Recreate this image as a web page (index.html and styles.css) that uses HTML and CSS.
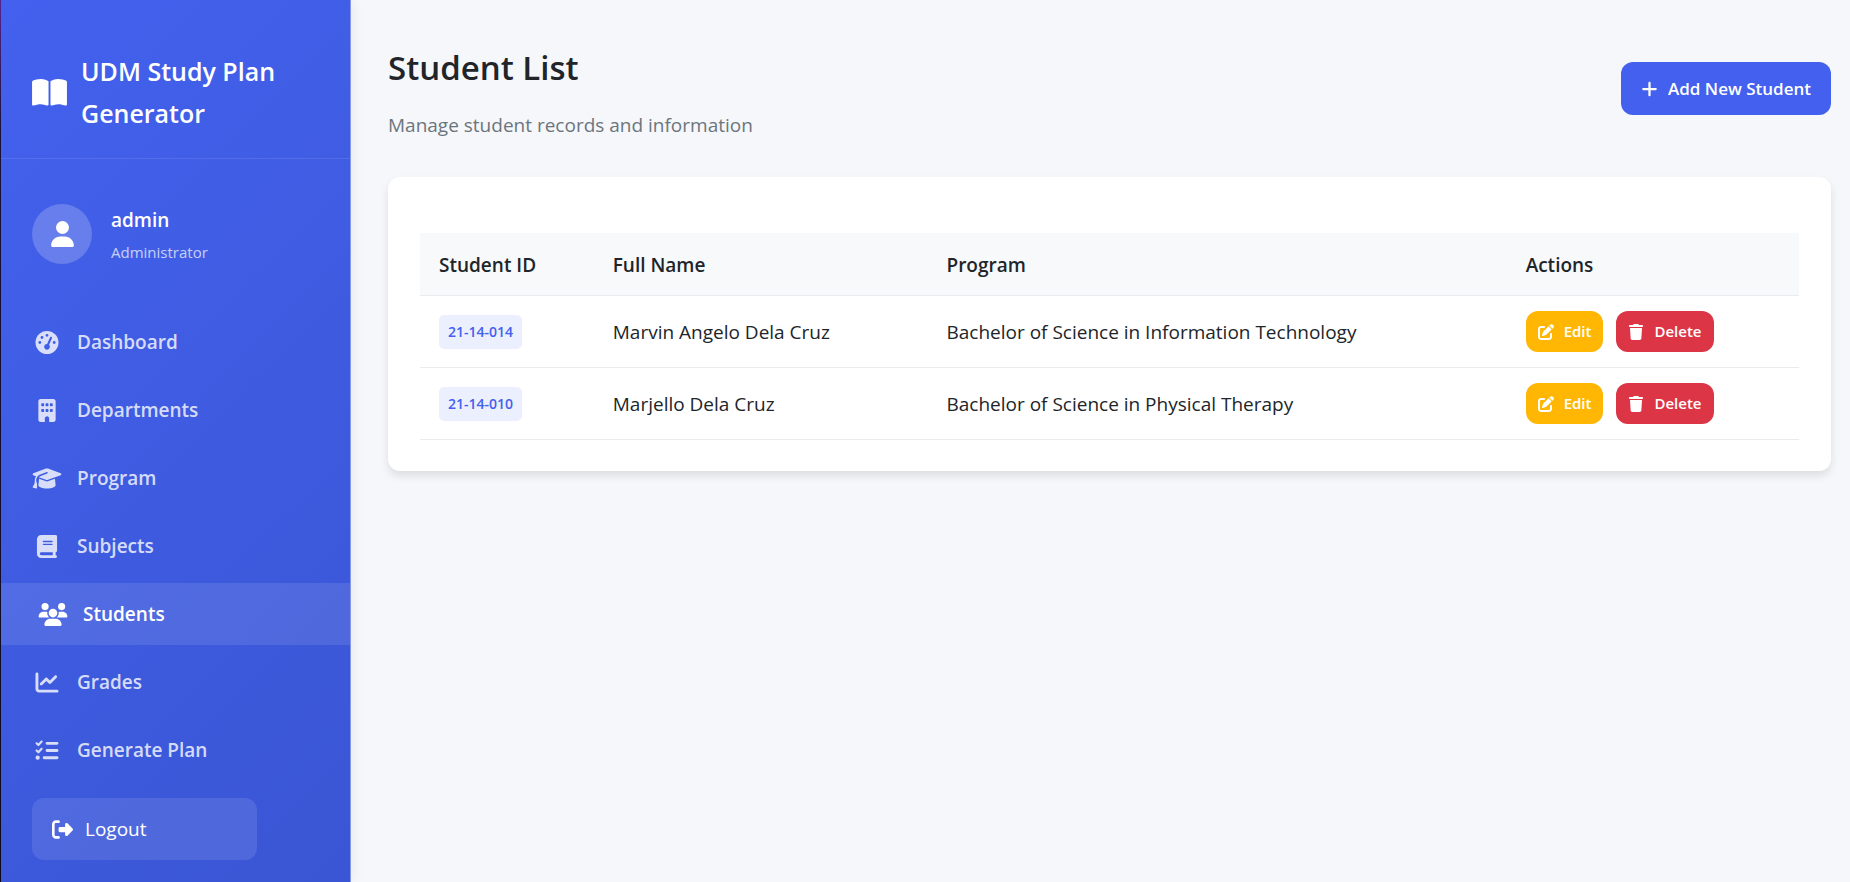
FILE: index.html
```html
<!DOCTYPE html>
<html lang="en">
<head>
<meta charset="utf-8">
<meta name="viewport" content="width=device-width, initial-scale=1">
<title>Student List - UDM Study Plan Generator</title>
<link rel="stylesheet" href="styles.css">
</head>
<body>
<svg class="sprite" aria-hidden="true">
  <symbol id="book-open" viewBox="0 0 576 512"><path d="M249.6 471.5c10.8 3.8 22.4-4.1 22.4-15.5V78.6c0-4.2-1.6-8.4-5-11C247.4 52 202.4 32 144 32C93.5 32 46.3 45.3 18.1 56.1C6.8 60.5 0 71.7 0 83.8V454.1c0 11.9 12.8 20.2 24.1 16.5C55.6 460.1 105.5 448 144 448c33.9 0 79 14 105.6 23.5zm76.8 0C353 462 398.1 448 432 448c38.5 0 88.4 12.1 119.9 22.6c11.3 3.8 24.1-4.6 24.1-16.5V83.8c0-12.1-6.8-23.3-18.1-27.6C529.7 45.3 482.5 32 432 32c-58.4 0-103.4 20-123 35.6c-3.3 2.6-5 6.8-5 11V456c0 11.4 11.7 19.3 22.4 15.5z"/></symbol>
  <symbol id="user" viewBox="0 0 448 512"><path d="M224 256A128 128 0 1 0 224 0a128 128 0 1 0 0 256zm-45.7 48C79.8 304 0 383.8 0 482.3C0 498.7 13.3 512 29.7 512H418.3c16.4 0 29.7-13.3 29.7-29.7C448 383.8 368.2 304 269.7 304H178.3z"/></symbol>
  <symbol id="gauge" viewBox="0 0 512 512"><path d="M0 256a256 256 0 1 1 512 0A256 256 0 1 1 0 256zM288 96a32 32 0 1 0 -64 0 32 32 0 1 0 64 0zM256 416c35.3 0 64-28.7 64-64c0-17.4-6.9-33.1-18.1-44.6L366 161.7c5.3-12.1-.2-26.3-12.3-31.6s-26.3 .2-31.6 12.3L257.9 288c-.6 0-1.3 0-1.9 0c-35.3 0-64 28.7-64 64s28.7 64 64 64zM176 144a32 32 0 1 0 -64 0 32 32 0 1 0 64 0zM96 288a32 32 0 1 0 0-64 32 32 0 1 0 0 64zm352-32a32 32 0 1 0 -64 0 32 32 0 1 0 64 0z"/></symbol>
  <symbol id="building" viewBox="0 0 384 512"><path fill-rule="evenodd" d="M48 0C21.5 0 0 21.5 0 48V464c0 26.5 21.5 48 48 48h96V432c0-26.5 21.5-48 48-48s48 21.5 48 48v80h96c26.5 0 48-21.5 48-48V48c0-26.5-21.5-48-48-48H48zM80 224h32a16 16 0 0 1 16 16v32a16 16 0 0 1-16 16H80a16 16 0 0 1-16-16v-32a16 16 0 0 1 16-16zM176 224h32a16 16 0 0 1 16 16v32a16 16 0 0 1-16 16h-32a16 16 0 0 1-16-16v-32a16 16 0 0 1 16-16zM272 224h32a16 16 0 0 1 16 16v32a16 16 0 0 1-16 16h-32a16 16 0 0 1-16-16v-32a16 16 0 0 1 16-16zM80 96h32a16 16 0 0 1 16 16v32a16 16 0 0 1-16 16H80a16 16 0 0 1-16-16v-32a16 16 0 0 1 16-16zM176 96h32a16 16 0 0 1 16 16v32a16 16 0 0 1-16 16h-32a16 16 0 0 1-16-16v-32a16 16 0 0 1 16-16zM272 96h32a16 16 0 0 1 16 16v32a16 16 0 0 1-16 16h-32a16 16 0 0 1-16-16v-32a16 16 0 0 1 16-16z"/></symbol>
  <symbol id="graduation" viewBox="0 0 640 512"><path d="M320 32c-8.1 0-16.1 1.4-23.7 4.1L15.8 137.4C6.3 140.9 0 149.9 0 160s6.3 19.1 15.8 22.6l57.9 20.9C57.3 229.3 48 259.8 48 291.9v28.1c0 28.4-10.8 57.7-22.3 80.8c-6.5 13-13.9 25.8-22.5 37.6C0 442.7-.9 448.3 .9 453.4s6 8.9 11.2 10.2l64 16c4.2 1.1 8.7 .3 12.4-2s6.3-6.1 7.1-10.4c8.6-42.8 4.3-81.2-2.1-108.7C90.3 344.3 86 329.8 80 316.5V291.9c0-30.2 10.2-58.7 27.9-81.5c12.9-15.5 29.6-28 49.2-35.7l157-61.7c8.2-3.2 17.5 .8 20.7 9s-.8 17.5-9 20.7l-157 61.7c-12.4 4.9-23.3 12.4-32.2 21.6l159.6 57.6c7.6 2.7 15.6 4.1 23.7 4.1s16.1-1.4 23.7-4.1L624.2 182.6c9.5-3.4 15.8-12.5 15.8-22.6s-6.3-19.1-15.8-22.6L343.7 36.1C336.1 33.4 328.1 32 320 32zM128 408c0 35.3 86 72 192 72s192-36.7 192-72L496.7 262.6 354.5 314c-11.1 4-22.8 6-34.5 6s-23.5-2-34.5-6L143.3 262.6 128 408z"/></symbol>
  <symbol id="book" viewBox="0 0 448 512"><path d="M96 0C43 0 0 43 0 96V416c0 53 43 96 96 96H384h32c17.7 0 32-14.3 32-32s-14.3-32-32-32V384c17.7 0 32-14.3 32-32V32c0-17.7-14.3-32-32-32H384 96zm0 384H352v64H96c-17.7 0-32-14.3-32-32s14.3-32 32-32zm32-240c0-8.8 7.2-16 16-16H336c8.8 0 16 7.2 16 16s-7.2 16-16 16H144c-8.8 0-16-7.2-16-16zm16 48H336c8.8 0 16 7.2 16 16s-7.2 16-16 16H144c-8.8 0-16-7.2-16-16s7.2-16 16-16z"/></symbol>
  <symbol id="users" viewBox="0 0 640 512"><path d="M144 0a80 80 0 1 1 0 160A80 80 0 1 1 144 0zM512 0a80 80 0 1 1 0 160A80 80 0 1 1 512 0zM0 298.7C0 239.8 47.8 192 106.7 192h42.7c15.9 0 31 3.5 44.6 9.7c-1.3 7.2-1.9 14.7-1.9 22.3c0 38.2 16.8 72.5 43.3 96c-.2 0-.4 0-.7 0H21.3C9.6 320 0 310.4 0 298.7zM405.3 320c-.2 0-.4 0-.7 0c26.6-23.5 43.3-57.8 43.3-96c0-7.6-.7-15-1.9-22.3c13.6-6.3 28.7-9.7 44.6-9.7h42.7C592.2 192 640 239.8 640 298.7c0 11.8-9.6 21.3-21.3 21.3H405.3zM224 224a96 96 0 1 1 192 0 96 96 0 1 1 -192 0zM128 485.3C128 411.7 187.7 352 261.3 352H378.7C452.3 352 512 411.7 512 485.3c0 14.7-11.9 26.7-26.7 26.7H154.7c-14.7 0-26.7-11.9-26.7-26.7z"/></symbol>
  <symbol id="chart" viewBox="0 0 512 512"><path d="M64 64c0-17.7-14.3-32-32-32S0 46.3 0 64V400c0 44.2 35.8 80 80 80H480c17.7 0 32-14.3 32-32s-14.3-32-32-32H80c-8.8 0-16-7.2-16-16V64zm406.6 86.6c12.5-12.5 12.5-32.8 0-45.3s-32.8-12.5-45.3 0L320 210.7l-57.4-57.4c-12.5-12.5-32.8-12.5-45.3 0l-112 112c-12.5 12.5-12.5 32.8 0 45.3s32.8 12.5 45.3 0L240 221.3l57.4 57.4c12.5 12.5 32.8 12.5 45.3 0l128-128z"/></symbol>
  <symbol id="tasks" viewBox="0 0 512 512"><path d="M152.1 38.2c9.9 8.9 10.7 24 1.8 33.9l-72 80c-4.4 4.9-10.6 7.8-17.2 7.9s-12.9-2.4-17.6-7L7 113C-2.3 103.6-2.3 88.4 7 79s24.6-9.4 33.9 0l22.1 22.1 55.1-61.2c8.9-9.9 24-10.7 33.9-1.8zm0 160c9.9 8.9 10.7 24 1.8 33.9l-72 80c-4.4 4.9-10.6 7.8-17.2 7.9s-12.9-2.4-17.6-7L7 273c-9.4-9.4-9.4-24.6 0-33.9s24.6-9.4 33.9 0l22.1 22.1 55.1-61.2c8.9-9.9 24-10.7 33.9-1.8zM224 96c0-17.7 14.3-32 32-32H480c17.7 0 32 14.3 32 32s-14.3 32-32 32H256c-17.7 0-32-14.3-32-32zm0 160c0-17.7 14.3-32 32-32H480c17.7 0 32 14.3 32 32s-14.3 32-32 32H256c-17.7 0-32-14.3-32-32zM160 416c0-17.7 14.3-32 32-32H480c17.7 0 32 14.3 32 32s-14.3 32-32 32H192c-17.7 0-32-14.3-32-32zM48 368a48 48 0 1 1 0 96 48 48 0 1 1 0-96z"/></symbol>
  <symbol id="logout" viewBox="0 0 512 512"><path d="M377.9 105.9L500.7 228.7c7.2 7.2 11.3 17.1 11.3 27.3s-4.1 20.1-11.3 27.3L377.9 406.1c-6.4 6.4-15 9.9-24 9.9c-18.7 0-33.9-15.2-33.9-33.9l0-62.1-128 0c-17.7 0-32-14.3-32-32l0-64c0-17.7 14.3-32 32-32l128 0 0-62.1c0-18.7 15.2-33.9 33.9-33.9c9 0 17.6 3.6 24 9.9zM160 96L96 96c-17.7 0-32 14.3-32 32l0 256c0 17.7 14.3 32 32 32l64 0c17.7 0 32 14.3 32 32s-14.3 32-32 32l-64 0c-53 0-96-43-96-96L0 128C0 75 43 32 96 32l64 0c17.7 0 32 14.3 32 32s-14.3 32-32 32z"/></symbol>
  <symbol id="plus" viewBox="0 0 448 512"><path d="M256 80c0-17.7-14.3-32-32-32s-32 14.3-32 32V224H48c-17.7 0-32 14.3-32 32s14.3 32 32 32H192V432c0 17.7 14.3 32 32 32s32-14.3 32-32V288H400c17.7 0 32-14.3 32-32s-14.3-32-32-32H256V80z"/></symbol>
  <symbol id="edit" viewBox="0 0 512 512"><path d="M471.6 21.7c-21.9-21.9-57.3-21.9-79.2 0L362.3 51.7l97.9 97.9 30.1-30.1c21.9-21.9 21.9-57.3 0-79.2L471.6 21.7zm-299.2 220c-6.1 6.1-10.8 13.6-13.5 21.9l-29.6 88.8c-2.9 8.6-.6 18.1 5.8 24.6s15.9 8.7 24.6 5.8l88.8-29.6c8.2-2.7 15.7-7.4 21.9-13.5L437.7 172.3 339.7 74.3 172.4 241.7zM96 64C43 64 0 107 0 160V416c0 53 43 96 96 96H352c53 0 96-43 96-96V320c0-17.7-14.3-32-32-32s-32 14.3-32 32v96c0 17.7-14.3 32-32 32H96c-17.7 0-32-14.3-32-32V160c0-17.7 14.3-32 32-32h96c17.7 0 32-14.3 32-32s-14.3-32-32-32H96z"/></symbol>
  <symbol id="trash" viewBox="0 0 448 512"><path d="M135.2 17.7L128 32H32C14.3 32 0 46.3 0 64S14.3 96 32 96H416c17.7 0 32-14.3 32-32s-14.3-32-32-32H320l-7.2-14.3C307.4 6.8 296.3 0 284.2 0H163.8c-12.1 0-23.2 6.8-28.6 17.7zM416 128H32L53.2 467c1.6 25.3 22.6 45 47.9 45H346.9c25.3 0 46.3-19.7 47.9-45L416 128z"/></symbol>
</svg>

<div class="layout">
  <aside class="sidebar">
    <div class="brand">
      <svg class="brand-icon" aria-hidden="true"><use href="#book-open"/></svg>
      <span class="brand-name">UDM Study Plan Generator</span>
    </div>
    <div class="profile">
      <span class="avatar"><svg class="avatar-icon" aria-hidden="true"><use href="#user"/></svg></span>
      <div class="profile-text">
        <span class="profile-name">admin</span>
        <span class="profile-role">Administrator</span>
      </div>
    </div>
    <nav class="nav" aria-label="Main">
      <a class="nav-link" href="#"><svg class="nav-icon" aria-hidden="true"><use href="#gauge"/></svg>Dashboard</a>
      <a class="nav-link" href="#"><svg class="nav-icon" aria-hidden="true"><use href="#building"/></svg>Departments</a>
      <a class="nav-link" href="#"><svg class="nav-icon" aria-hidden="true"><use href="#graduation"/></svg>Program</a>
      <a class="nav-link" href="#"><svg class="nav-icon" aria-hidden="true"><use href="#book"/></svg>Subjects</a>
      <a class="nav-link active" href="#" aria-current="page"><svg class="nav-icon" aria-hidden="true"><use href="#users"/></svg>Students</a>
      <a class="nav-link" href="#"><svg class="nav-icon" aria-hidden="true"><use href="#chart"/></svg>Grades</a>
      <a class="nav-link" href="#"><svg class="nav-icon" aria-hidden="true"><use href="#tasks"/></svg>Generate Plan</a>
    </nav>
    <a class="logout" href="#"><svg class="logout-icon" aria-hidden="true"><use href="#logout"/></svg>Logout</a>
  </aside>

  <main class="main">
    <header class="page-header">
      <div class="heading">
        <h1 class="title">Student List</h1>
        <p class="subtitle">Manage student records and information</p>
      </div>
      <button class="btn btn-add" type="button"><svg class="add-icon" aria-hidden="true"><use href="#plus"/></svg>Add New Student</button>
    </header>

    <section class="card">
      <table class="table">
        <colgroup><col class="col-id"><col class="col-name"><col class="col-program"><col class="col-actions"></colgroup>
        <thead>
          <tr><th scope="col">Student ID</th><th scope="col">Full Name</th><th scope="col">Program</th><th scope="col">Actions</th></tr>
        </thead>
        <tbody>
          <tr>
            <td><span class="badge">21-14-014</span></td>
            <td>Marvin Angelo Dela Cruz</td>
            <td>Bachelor of Science in Information Technology</td>
            <td><div class="actions">
              <button class="btn btn-small btn-edit" type="button"><svg class="btn-icon" aria-hidden="true"><use href="#edit"/></svg>Edit</button>
              <button class="btn btn-small btn-delete" type="button"><svg class="btn-icon" aria-hidden="true"><use href="#trash"/></svg>Delete</button>
            </div></td>
          </tr>
          <tr>
            <td><span class="badge">21-14-010</span></td>
            <td>Marjello Dela Cruz</td>
            <td>Bachelor of Science in Physical Therapy</td>
            <td><div class="actions">
              <button class="btn btn-small btn-edit" type="button"><svg class="btn-icon" aria-hidden="true"><use href="#edit"/></svg>Edit</button>
              <button class="btn btn-small btn-delete" type="button"><svg class="btn-icon" aria-hidden="true"><use href="#trash"/></svg>Delete</button>
            </div></td>
          </tr>
        </tbody>
      </table>
    </section>
  </main>
</div>
</body>
</html>
```
FILE: styles.css
```css
:root {
  --primary: #4361ee;
  --primary-dark: #3a56d4;
  --text: #212529;
  --muted: #6c757d;
  --line: #e9ecef;
}

*,
*::before,
*::after {
  box-sizing: border-box;
}

body {
  margin: 0;
  background: #f5f7fb;
  color: var(--text);
  font-family: "Open Sans", "Noto Sans", sans-serif;
  font-size: 19px;
  line-height: 32px;
}

svg {
  fill: currentColor;
  flex: none;
}

.sprite {
  display: none;
}

.layout {
  display: flex;
  min-height: 100vh;
}

/* Sidebar, with a thin dark strip down its left edge */
.sidebar {
  flex: none;
  width: 351px;
  padding-left: 1px;
  border-right: 1px solid #8797e8;
  background:
    linear-gradient(#55258f, #17123a 15%, #0c0a1e) left / 1px 100% no-repeat,
    linear-gradient(135deg, var(--primary), var(--primary-dark));
  box-shadow: 2px 0 12px rgba(0, 0, 0, 0.06);
  color: #fff;
}

.brand {
  display: flex;
  align-items: center;
  gap: 14px;
  padding: 50px 31px 24px;
  border-bottom: 1px solid rgba(255, 255, 255, 0.1);
  font-size: 25px;
  font-weight: 600;
  line-height: 42px;
}

.brand-icon {
  width: 35px;
  height: 31px;
}

.profile {
  display: flex;
  align-items: flex-start;
  gap: 19px;
  padding: 45px 31px 43px;
}

.avatar {
  display: grid;
  place-items: center;
  width: 60px;
  height: 60px;
  border-radius: 50%;
  background: rgba(255, 255, 255, 0.2);
}

.avatar-icon {
  width: 23px;
  height: 26px;
}

.profile-text {
  display: flex;
  flex-direction: column;
}

.profile-name {
  font-weight: 600;
}

.profile-role {
  font-size: 15px;
  opacity: 0.7;
}

.nav {
  display: flex;
  flex-direction: column;
  gap: 6px;
}

.nav-link {
  display: flex;
  align-items: center;
  gap: 15px;
  padding: 15px 31px;
  color: rgba(255, 255, 255, 0.8);
  font-weight: 600;
  text-decoration: none;
}

.nav-link.active {
  padding-left: 37px;
  background: rgba(255, 255, 255, 0.1);
  color: #fff;
}

.nav-icon {
  width: 30px;
  height: 23px;
}

.logout {
  display: flex;
  align-items: center;
  gap: 12px;
  width: 225px;
  margin: 17px 31px 21px;
  padding: 15px 20px;
  border-radius: 12px;
  background: rgba(255, 255, 255, 0.1);
  color: #fff;
  text-decoration: none;
}

.logout-icon {
  width: 21px;
  height: 21px;
}

/* Content */
.main {
  flex: 1;
  min-width: 0;
  padding: 36px 19px 36px 37px;
}

.page-header {
  display: flex;
  align-items: center;
  justify-content: space-between;
  margin-bottom: 36px;
}

.title {
  margin: 0 0 10px;
  font-size: 33px;
  font-weight: 600;
  line-height: 63px;
}

.subtitle {
  margin: 0;
  color: var(--muted);
}

.btn {
  display: inline-flex;
  align-items: center;
  border: 0;
  border-radius: 12px;
  color: #fff;
  font-family: inherit;
  font-weight: 600;
  cursor: pointer;
}

.btn-add {
  gap: 10px;
  padding: 12px 20px;
  background: var(--primary);
  font-size: 17px;
  line-height: 29px;
}

.add-icon {
  width: 17px;
  height: 18px;
}

.card {
  padding: 56px 32px 31px;
  border-radius: 12px;
  background: #fff;
  box-shadow: 0 5px 8px rgba(0, 0, 0, 0.1);
}

.table {
  width: 100%;
  border-collapse: separate;
  border-spacing: 0;
  table-layout: fixed;
}

.col-id {
  width: 12.6%;
}

.col-name {
  width: 24.2%;
}

.col-program {
  width: 42%;
}

.table th,
.table td {
  border-bottom: 1px solid var(--line);
  text-align: left;
  vertical-align: middle;
}

.table th {
  padding: 16px 19px 14px;
  background: #f8f9fb;
  font-weight: 600;
}

.table td {
  padding: 15px 19px;
}

.badge {
  display: inline-block;
  padding: 4px 9px;
  border-radius: 5px;
  background: #eceffd;
  color: var(--primary);
  font-size: 14px;
  font-weight: 600;
  line-height: 26px;
  vertical-align: middle;
}

.actions {
  display: flex;
  gap: 13px;
}

.btn-small {
  gap: 10px;
  padding: 8px 12px;
  font-size: 15px;
  line-height: 25px;
}

.btn-icon {
  width: 16px;
  height: 16px;
}

.btn-edit {
  background: #ffb703;
}

.btn-delete {
  background: #dc3545;
}
```
